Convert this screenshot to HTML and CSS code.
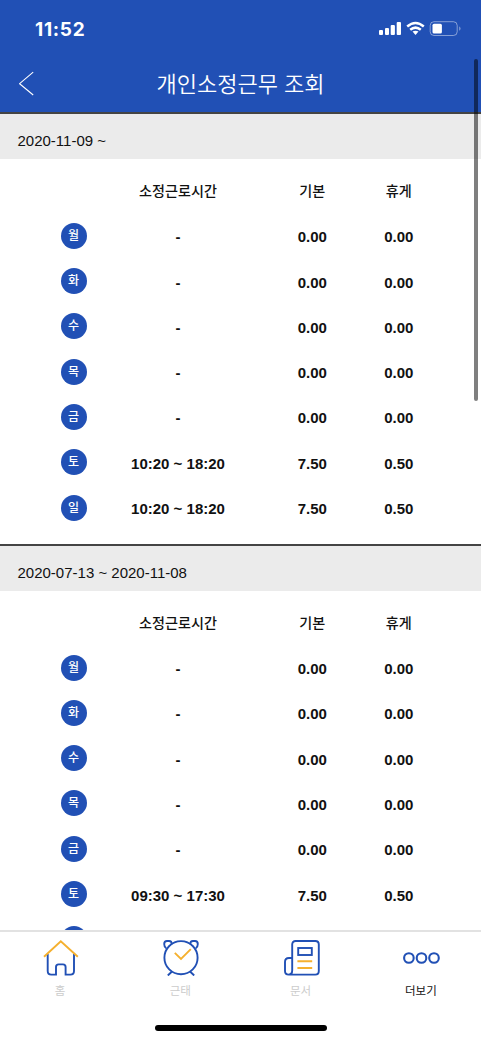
FILE: index.html
```
<!DOCTYPE html>
<html lang="ko">
<head>
    <meta charset="UTF-8">
    <meta name="viewport" content="width=device-width, initial-scale=1.0">
    <title>개인소정근무 조회</title>
    <link rel="stylesheet" href="styles.css">
</head>
<body>
    <div class="app">
        <header class="header">
            <div class="status-bar">
                <span class="clock">11:52</span>
                <svg class="status-icons" width="84" height="16" viewBox="0 0 84 16">
                    <g fill="#fff">
                        <rect x="1" y="9" width="4" height="5" rx="1"/>
                        <rect x="7" y="7" width="4" height="7" rx="1"/>
                        <rect x="12.7" y="4" width="4.2" height="10" rx="1"/>
                        <rect x="18.7" y="1" width="4.3" height="13" rx="1"/>
                        <path d="M34.5 10.6 Q37.5 8.8 40.5 10.6 L37.5 13.9Z"/>
                        <rect x="54.5" y="2.8" width="9.4" height="9.8" rx="1.5"/>
                        <path d="M81.2 5.2 Q84 7.5 81.2 9.8Z" opacity=".45"/>
                    </g>
                    <g fill="none" stroke="#fff" stroke-width="2.5">
                        <path d="M29.2 5.5 Q37.5 -1.4 45.8 5.5"/>
                        <path d="M32.2 8.8 Q37.5 4.4 42.8 8.8"/>
                        <rect x="52.2" y=".7" width="27" height="13.8" rx="3.8" stroke-width="1" opacity=".45"/>
                    </g>
                </svg>
            </div>
            <div class="title-bar">
                <svg class="back" width="16" height="26" viewBox="0 0 16 26">
                    <path d="M14.2 2.2 L.6 13.7 L14.2 25" fill="none" stroke="#fff" stroke-width="1.1"/>
                </svg>
                <h1>개인소정근무 조회</h1>
            </div>
        </header>

        <main class="content">
            <section class="period">
                <h2>2020-11-09 ~</h2>
                <div class="schedule">
                    <div class="row head"><span></span><span>소정근로시간</span><span>기본</span><span>휴게</span></div>
                    <div class="row"><span class="day">월</span><span>-</span><span>0.00</span><span>0.00</span></div>
                    <div class="row"><span class="day">화</span><span>-</span><span>0.00</span><span>0.00</span></div>
                    <div class="row"><span class="day">수</span><span>-</span><span>0.00</span><span>0.00</span></div>
                    <div class="row"><span class="day">목</span><span>-</span><span>0.00</span><span>0.00</span></div>
                    <div class="row"><span class="day">금</span><span>-</span><span>0.00</span><span>0.00</span></div>
                    <div class="row"><span class="day">토</span><span>10:20 ~ 18:20</span><span>7.50</span><span>0.50</span></div>
                    <div class="row"><span class="day">일</span><span>10:20 ~ 18:20</span><span>7.50</span><span>0.50</span></div>
                </div>
            </section>

            <section class="period">
                <h2>2020-07-13 ~ 2020-11-08</h2>
                <div class="schedule">
                    <div class="row head"><span></span><span>소정근로시간</span><span>기본</span><span>휴게</span></div>
                    <div class="row"><span class="day">월</span><span>-</span><span>0.00</span><span>0.00</span></div>
                    <div class="row"><span class="day">화</span><span>-</span><span>0.00</span><span>0.00</span></div>
                    <div class="row"><span class="day">수</span><span>-</span><span>0.00</span><span>0.00</span></div>
                    <div class="row"><span class="day">목</span><span>-</span><span>0.00</span><span>0.00</span></div>
                    <div class="row"><span class="day">금</span><span>-</span><span>0.00</span><span>0.00</span></div>
                    <div class="row"><span class="day">토</span><span>09:30 ~ 17:30</span><span>7.50</span><span>0.50</span></div>
                    <div class="row"><span class="day"></span></div>
                </div>
            </section>
        </main>

        <nav class="tabs">
            <a class="tab">
                <svg width="36" height="36" viewBox="0 0 36 36" fill="none" stroke="#2150b5" stroke-width="1.9">
                    <path d="M4.7 14 V31 Q4.7 34.6 8.3 34.6 H13 V27 Q13 24.4 15.6 24.4 H20 Q22.6 24.4 22.6 27 V34.6 H27.4 Q31 34.6 31 31 V14"/>
                    <path d="M1 16.8 L17.8 1.3 L34.8 16.8" stroke="#f5b02e"/>
                </svg>
                <span>홈</span>
            </a>
            <a class="tab">
                <svg width="36" height="36" viewBox="0 0 36 36" fill="none" stroke="#2150b5" stroke-width="1.9">
                    <circle cx="18" cy="17.7" r="16.6"/>
                    <path d="M3.2 8.2 Q1.2 7 1.2 4 Q1.2 1 4 1 H6 Q8.8 1 8.8 4.4 M27.2 4.4 Q27.2 1 30 1 H32 Q34.8 1 34.8 4 Q34.8 7 32.8 8.2 M9 31.5 L4.8 35.5 M27 31.5 L31.2 35.5"/>
                    <path d="M11.8 12.8 L18 19 L27.8 9.2" stroke="#f5b02e"/>
                </svg>
                <span>근태</span>
            </a>
            <a class="tab">
                <svg width="36" height="36" viewBox="0 0 36 36" fill="none" stroke="#2150b5" stroke-width="1.9">
                    <path d="M8.2 30.6 V4.5 Q8.2 1 11.7 1 H31.3 Q34.8 1 34.8 4.5 V31 Q34.8 34.6 31.3 34.6 H4.7 Q1 34.6 1 31 V22 Q1 18 5 18 H8.2 M8.2 30.6 Q8.2 34.6 4.7 34.6"/>
                    <rect x="14.2" y="8" width="13.6" height="7"/>
                    <path d="M13.4 21.2 H28.2 M13.4 28 H28.2" stroke="#f5b02e"/>
                </svg>
                <span>문서</span>
            </a>
            <a class="tab active">
                <svg width="38" height="36" viewBox="0 0 38 36" fill="none" stroke="#2150b5" stroke-width="2.1">
                    <circle cx="5.9" cy="18" r="4.8"/>
                    <circle cx="18.5" cy="18" r="4.8"/>
                    <circle cx="31" cy="18" r="4.8"/>
                </svg>
                <span>더보기</span>
            </a>
        </nav>
        <div class="home-indicator"></div>
        <div class="scrollbar"></div>
    </div>
</body>
</html>
```
FILE: styles.css
```
* {
    box-sizing: border-box;
}

body {
    margin: 0;
    background: #fff;
    color: #111;
    font-family: "Liberation Sans", "Noto Sans CJK KR", sans-serif;
    overflow: hidden;
}

.app {
    position: relative;
    display: flex;
    flex-direction: column;
    height: 1040px;
    overflow: hidden;
}

/* Header */
.header {
    flex: none;
    height: 112px;
    background: #2150b5;
    color: #fff;
}

.status-bar {
    display: flex;
    justify-content: space-between;
    align-items: center;
    height: 58px;
    padding: 0 19px 0 35px;
}

.clock {
    font-family: Inter, sans-serif;
    font-size: 19px;
    font-weight: 700;
    letter-spacing: 0.7px;
}

.status-icons {
    display: block;
}

.title-bar {
    display: grid;
    grid-template-columns: 16px 1fr 16px;
    align-items: center;
    height: 50px;
    padding: 0 19px;
}

h1 {
    margin: -2px 0 0;
    font-family: "Noto Sans CJK KR", sans-serif;
    font-size: 22px;
    font-weight: 350;
    line-height: 32px;
    text-align: center;
}

/* Periods */
.content {
    flex: none;
    height: 817.5px;
    overflow: hidden;
}

.period {
    height: 431.8px;
    border-top: 2px solid #444;
}

h2 {
    height: 45px;
    margin: 0;
    padding: 5px 17.5px 0;
    background: #ebebeb;
    font-size: 15px;
    font-weight: 400;
    line-height: 44px;
}

.schedule {
    padding: 10.3px 39px 0 61px;
}

.row {
    display: grid;
    grid-template-columns: 26px 182px 86.5px 86.5px;
    align-items: center;
    height: 45.3px;
    font-size: 15px;
    font-weight: 700;
    line-height: 20px;
    text-align: center;
}

.head {
    padding-bottom: 3px;
    font-family: "Noto Sans CJK KR", sans-serif;
    font-size: 14.1px;
    font-weight: 500;
}

.day {
    width: 26px;
    height: 26px;
    margin-bottom: 3px;
    padding-right: 1px;
    border-radius: 50%;
    background: #2150b5;
    color: #fff;
    font-family: "Noto Sans CJK KR", sans-serif;
    font-size: 12px;
    font-weight: 500;
    line-height: 24px;
}

/* Bottom tabs */
.tabs {
    display: grid;
    grid-template-columns: repeat(4, 1fr);
    flex: none;
    height: 76px;
    padding-top: 8px;
    border-top: 2px solid #e2e2e2;
    background: #fff;
}

.tab {
    display: flex;
    flex-direction: column;
    align-items: center;
    color: #ccc;
    font-family: "Noto Sans CJK KR", sans-serif;
    font-size: 11.5px;
    line-height: 18px;
}

.tab svg {
    margin-left: 2px;
}

.tab span {
    margin-top: 5px;
}

.active {
    color: #111;
}

.home-indicator {
    width: 172px;
    height: 6px;
    margin: 19px auto 0;
    border-radius: 3px;
    background: #000;
}

.scrollbar {
    position: absolute;
    top: 59px;
    right: 3.5px;
    width: 3.5px;
    height: 342px;
    border-radius: 2px;
    background: rgba(0, 0, 0, 0.5);
}
```
